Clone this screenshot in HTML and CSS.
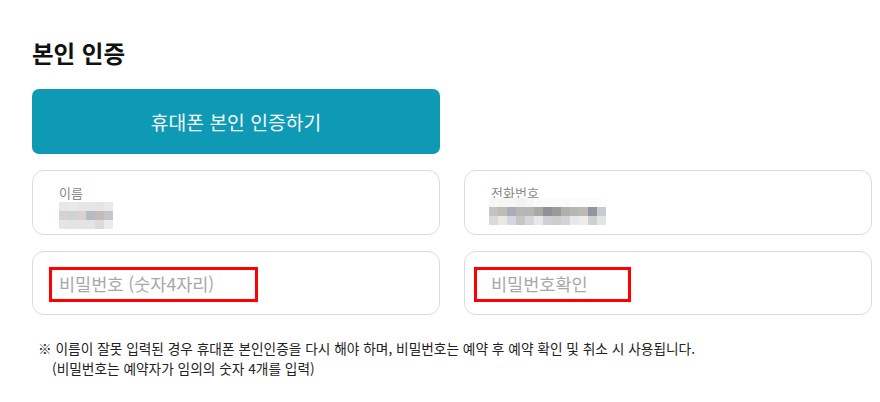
FILE: index.html
```html
<!DOCTYPE html>
<html lang="ko">
<head>
<meta charset="utf-8">
<link rel="stylesheet" href="styles.css">
</head>
<body>
<section class="verify">
  <h2 class="title">본인 인증</h2>
  <button class="btn-verify" type="button">휴대폰 본인 인증하기</button>
  <div class="fields">
    <div class="field field-name">
      <label class="field-label">이름</label>
      <div class="mosaic mosaic-name">
        <i style="background:#e8e6e6"></i><i style="background:#e8ebec"></i><i style="background:#e9e5e5"></i><i style="background:#e6e6ea"></i><i style="background:#e8e3e4"></i><i style="background:#e7eaec"></i>
        <i style="background:#d6d0cf"></i><i style="background:#cfd3d2"></i><i style="background:#d8d1d0"></i><i style="background:#b8bcc0"></i><i style="background:#c4bcbb"></i><i style="background:#c3c7cb"></i>
        <i style="background:#e5e6e3"></i><i style="background:#dfe4e4"></i><i style="background:#e5e4e4"></i><i style="background:#e3e3e7"></i><i style="background:#e0d8da"></i><i style="background:#eaecee"></i>
      </div>
    </div>
    <div class="field field-phone">
      <label class="field-label">전화번호</label>
      <div class="mosaic mosaic-phone">
        <i style="background:#f7f7f7"></i><i style="background:#f5f5f4"></i><i style="background:#f6f6f7"></i><i style="background:#f3f3f3"></i><i style="background:#f6f6f6"></i><i style="background:#fafafa"></i><i style="background:#fbfbfb"></i><i style="background:#fbfbfb"></i><i style="background:#fbfbfb"></i><i style="background:#fcfcfc"></i><i style="background:#fcfcfc"></i><i style="background:#fcfcfc"></i><i style="background:#fdfdfd"></i>
        <i style="background:#c4c3c2"></i><i style="background:#c0bab4"></i><i style="background:#aaadb8"></i><i style="background:#b8b7b6"></i><i style="background:#b7b6b4"></i><i style="background:#a9aaa5"></i><i style="background:#8f9196"></i><i style="background:#999b99"></i><i style="background:#b2aeac"></i><i style="background:#b7b8b4"></i><i style="background:#bdb9b4"></i><i style="background:#92959d"></i><i style="background:#c8cbd0"></i>
        <i style="background:#dcd9d8"></i><i style="background:#e8e8e8"></i><i style="background:#d5d7dc"></i><i style="background:#c7c6c4"></i><i style="background:#d4d7db"></i><i style="background:#e8e8e8"></i><i style="background:#d0d0d4"></i><i style="background:#cdcdcf"></i><i style="background:#d4d4d4"></i><i style="background:#e6e8ec"></i><i style="background:#eeecea"></i><i style="background:#cfd0d2"></i><i style="background:#e2e4e6"></i>
      </div>
    </div>
    <div class="field field-input">
      <input class="input" type="password" placeholder="비밀번호 (숫자4자리)">
      <span class="mark mark-left"></span>
    </div>
    <div class="field field-input">
      <input class="input" type="password" placeholder="비밀번호확인">
      <span class="mark mark-right"></span>
    </div>
  </div>
  <p class="note">※ 이름이 잘못 입력된 경우 휴대폰 본인인증을 다시 해야 하며, 비밀번호는 예약 후 예약 확인 및 취소 시 사용됩니다.<br>(비밀번호는 예약자가 임의의 숫자 4개를 입력)</p>
</section>
</body>
</html>
```

FILE: styles.css
```css
html, body {
  margin: 0;
  padding: 0;
  background: #ffffff;
}

body {
  font-family: "Noto Sans CJK KR", "Noto Sans", sans-serif;
  color: #111;
}

.verify {
  width: 840px;
  margin-left: 32px;
  padding-top: 37px;
}

.title {
  margin: 0;
  font-size: 23.5px;
  font-weight: 700;
  line-height: 32px;
  color: #111;
}

.btn-verify {
  display: block;
  margin-top: 20px;
  width: 408px;
  height: 65px;
  border: 0;
  border-radius: 7px;
  background: #0e9ab5;
  color: #f4fbfc;
  font-family: inherit;
  font-size: 19.3px;
  font-weight: 400;
  padding: 0;
  cursor: pointer;
}

.fields {
  margin-top: 16px;
  display: grid;
  grid-template-columns: 408px 408px;
  column-gap: 24px;
  row-gap: 16px;
}

.field {
  position: relative;
  box-sizing: border-box;
  height: 65px;
  border: 1px solid #dcdcdc;
  border-radius: 12px;
  padding: 0 0 0 26px;
  background: #fff;
}

.field-input {
  height: 64px;
  display: flex;
  align-items: center;
}

.field-label {
  display: block;
  margin-top: 13px;
  font-size: 13px;
  line-height: 17px;
  color: #8a8a8a;
}

.mosaic {
  display: grid;
  grid-auto-rows: 9px;
}

.mosaic i {
  display: block;
}

.mosaic-name {
  margin-top: 1px;
  grid-template-columns: repeat(6, 9px);
}

.mosaic-phone {
  margin-top: -3px;
  margin-left: -2px;
  grid-template-columns: repeat(13, 9px);
}

.input {
  border: 0;
  outline: none;
  padding: 0;
  margin: 0;
  width: 340px;
  height: 34px;
  font-family: inherit;
  font-size: 17.5px;
  color: #333;
  background: transparent;
}

.input::placeholder {
  color: #a8a8a8;
}

.mark {
  position: absolute;
  top: 15px;
  height: 35px;
  box-sizing: border-box;
  border: 3px solid #ff0000;
  pointer-events: none;
}

.mark-left {
  left: 16px;
  width: 209px;
}

.mark-right {
  left: 9px;
  width: 157px;
}

.note {
  margin: 23px 0 0 6px;
  padding-left: 14px;
  text-indent: -14px;
  font-size: 13.7px;
  line-height: 20px;
  color: #222;
}
```
